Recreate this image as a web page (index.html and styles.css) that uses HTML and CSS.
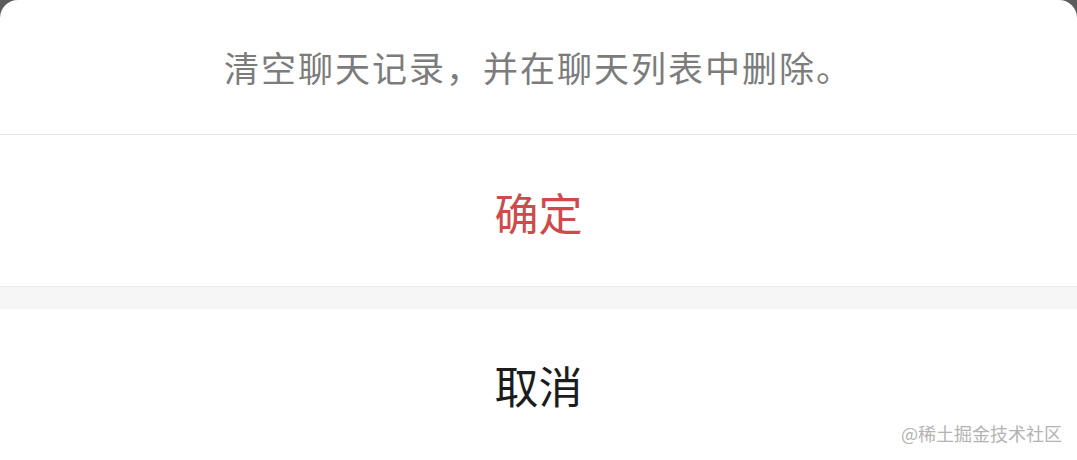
FILE: index.html
```html
<!DOCTYPE html>
<html lang="zh-CN">
<head>
<meta charset="utf-8">
<title>Action Sheet</title>
<link rel="stylesheet" href="styles.css">
</head>
<body>
  <div class="sheet">
    <div class="sheet-title">清空聊天记录，并在聊天列表中删除。</div>
    <div class="sheet-action sheet-action-danger">确定</div>
    <div class="sheet-gap"></div>
    <div class="sheet-action sheet-action-cancel">取消</div>
  </div>
  <div class="watermark">@稀土掘金技术社区</div>
</body>
</html>
```

FILE: styles.css
```css
html, body {
  margin: 0;
  padding: 0;
  height: 100%;
}
body {
  background: #5c5c5c;
  overflow: hidden;
  font-family: "Noto Sans CJK SC", "Noto Sans", sans-serif;
  position: relative;
}
.sheet {
  background: #ffffff;
  border-radius: 18px 18px 0 0;
  display: flex;
  flex-direction: column;
  height: 100%;
}
.sheet-title {
  height: 135px;
  display: flex;
  align-items: center;
  justify-content: center;
  padding-bottom: 1px;
  box-sizing: border-box;
  font-size: 35px;
  letter-spacing: 2px;
  color: #7c7c7c;
  border-bottom: 1px solid #e6e6e6;
}
.sheet-action {
  display: flex;
  align-items: center;
  justify-content: center;
  font-size: 44px;
}
.sheet-action-danger {
  height: 152px;
  color: #cf4a4a;
  border-bottom: 1px solid #ececec;
  box-sizing: border-box;
  padding-top: 2px;
}
.sheet-gap {
  height: 22px;
  background: #f6f6f6;
}
.sheet-action-cancel {
  flex: 1;
  align-items: flex-start;
  padding-top: 44px;
  color: #1c1c1c;
}
.watermark {
  position: absolute;
  right: 15px;
  bottom: 14px;
  font-size: 18px;
  color: #b3b3b3;
}
```
